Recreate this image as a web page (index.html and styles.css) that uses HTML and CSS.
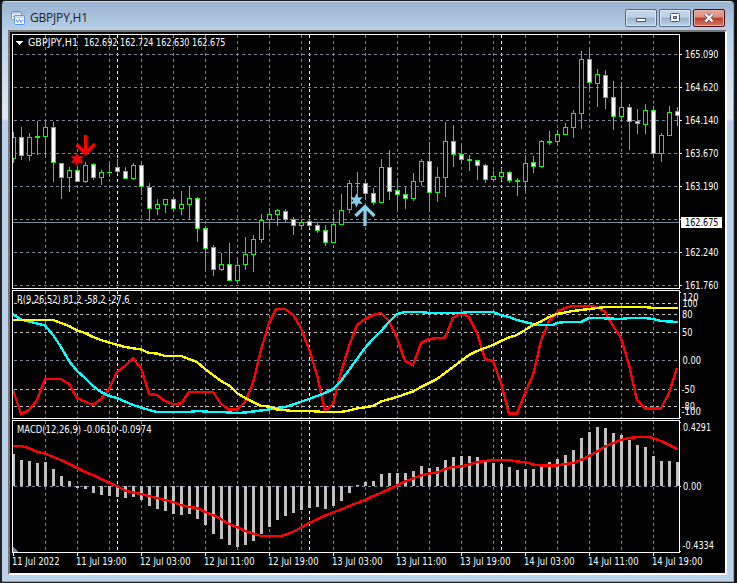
FILE: index.html
```
<!DOCTYPE html>
<html lang="en">
  <head>
    <meta charset="UTF-8" />
    <title>GBPJPY,H1</title>
    <link rel="stylesheet" href="styles.css">
  </head>
  <body>
    <div class="window">
      <div class="titlebar">
        <svg class="app-icon" width="14" height="14" viewBox="0 0 14 14">
          <rect x="0.5" y="0.5" width="10" height="8" rx="1" fill="#fff" stroke="#5b93e8" />
          <path d="M1 2h9" stroke="#5b93e8" />
          <path d="M2 6l2-2 1.500 2" fill="none" stroke="#5b93e8" />
          <rect x="3.500" y="4.500" width="10" height="9" rx="1" fill="#fff" stroke="#5b93e8" />
          <path d="M4 6h9" stroke="#8db5f2" />
          <path d="M5 8.500l1.500 3 2-3 1.500 3 2-3" fill="none" stroke="#5b93e8" />
        </svg>
        <span class="title">GBPJPY,H1</span>
        <div class="buttons">
          <button class="btn">
            <svg width="12" height="12"><rect x="1.500" y="6.500" width="9" height="3" fill="#fff" stroke="#535666" /></svg>
          </button>
          <button class="btn">
            <svg width="12" height="12"><rect x="1.500" y="1.500" width="9" height="8" rx="1" fill="#fff" stroke="#535666" /><rect x="4.500" y="4.500" width="3" height="2" fill="#9cb6d2" stroke="#535666" /></svg>
          </button>
          <button class="btn btn-close">
            <svg width="12" height="12"><path d="M2.500 2l7 7.500M9.500 2l-7 7.500" stroke="#535666" stroke-width="4" /><path d="M2.500 2l7 7.500M9.500 2l-7 7.500" stroke="#fff" stroke-width="2.400" /></svg>
          </button>
        </div>
      </div>
      <div class="client">
        <svg class="chart" width="715" height="541" viewBox="10 32 715 541"></svg>
      </div>
    </div>
    <script src="chart.js"></script>
  </body>
</html>
```
FILE: styles.css
```
body {
  margin: 0;
  background-color: #111;
  overflow: hidden;
}
.window {
  box-sizing: border-box;
  width: 735px;
  height: 583px;
  display: flex;
  flex-direction: column;
  padding: 0 6px 6px 6px;
  border: 1px solid #1c1c1c;
  border-left: 2px solid #222;
  border-radius: 5px 5px 0 0;
  background: linear-gradient(#fff 0, #98b3d0 1px, #b9d1ea 30px, #dfe9f5 118px, #b9d1ea 120px, #b9d1ea);
  box-shadow: inset -1px -1px 0 #35c3e6;
}
.titlebar {
  display: flex;
  align-items: center;
  height: 29px;
  padding: 5px 3px 0 3px;
  box-sizing: border-box;
}
.title {
  margin-left: 5px;
  font-family: "Open Sans", sans-serif;
  font-size: 12px;
  line-height: 16px;
  letter-spacing: -0.2px;
  color: #222;
}
.buttons {
  display: flex;
  gap: 2px;
  margin-left: auto;
}
.btn {
  display: flex;
  justify-content: center;
  align-items: center;
  box-sizing: border-box;
  width: 32px;
  height: 18px;
  padding: 0;
  border: 1px solid #56667f;
  border-radius: 2px;
  background: linear-gradient(#c5d7ea 0, #bdd0e6 45%, #98b3d0 50%, #b9d1ea 100%);
  box-shadow: inset 0 0 0 1px #dbe7f4;
}
.btn-close {
  border-color: #43101a;
  background: linear-gradient(#eba79b 0, #dd8d80 45%, #b83d27 50%, #d47863 100%);
  box-shadow: inset 0 0 0 1px #e9aaa0;
}
.client {
  width: 715px;
  height: 541px;
  border: 2px solid #fff;
  border-top-color: #777;
  border-left-color: #777;
  background-color: #000;
}
.chart {
  display: block;
  shape-rendering: crispEdges;
}
.label {
  font-family: "DejaVu Sans Condensed", "DejaVu Sans", sans-serif;
  font-size: 11px;
  fill: #fff;
}
.label-current {
  fill: #000;
}
.smooth {
  shape-rendering: auto;
}
```
FILE: chart.js
```
const svg = document.querySelector(".chart");
const GRID = "#778899";
const LEVEL = "#c0c0c0";
const LEFT = 13;
const STEP = 8;

function add(tag, attrs, text) {
  const el = document.createElementNS("http://www.w3.org/2000/svg", tag);
  for (let key in attrs) el.setAttribute(key, attrs[key]);
  if (text) el.textContent = text;
  svg.appendChild(el);
}
function rect(x, y, width, height, fill) {
  add("rect", { x, y, width, height, fill });
}
function dash(x1, y1, x2, y2, stroke) {
  add("line", { x1, y1, x2, y2, stroke, "stroke-dasharray": "3 3" });
}
function label(x, y, text, width, cls) {
  add("text", { x, y, class: "label " + (cls || ""), textLength: width, lengthAdjust: "spacingAndGlyphs" }, text);
}
function curve(points, stroke) {
  add("polyline", { points, stroke, fill: "none", "stroke-width": 2.4 });
}

// high, body top, body bottom, low, type (1 = down, 0 = up)
const candles = [
  [132,137,159,163,0],[127,137,156,160,1],[133,137,156,161,0],[121,136,138,155,0],[119,127,137,158,0],
  [122,127,163,182,1],[163,163,178,199,1],[167,170,178,192,0],[166,170,182,182,1],[162,165,182,183,0],
  [163,164,178,180,1],[170,172,178,185,0],[164,172,173,177,0],[159,167,172,174,1],[167,171,179,179,1],
  [163,165,179,180,0],[162,165,187,195,1],[183,187,209,221,1],[199,204,209,215,0],[199,199,205,213,0],
  [197,199,209,212,1],[191,204,209,215,0],[186,198,205,220,0],[197,198,229,242,1],[226,228,249,269,1],
  [245,247,270,276,1],[253,264,270,271,0],[243,264,281,281,1],[260,265,281,283,0],[237,254,265,270,0],
  [235,239,255,272,0],[214,220,240,243,0],[208,214,220,227,0],[209,210,215,226,0],[209,211,220,223,1],
  [217,219,226,235,1],[219,222,226,229,0],[219,221,226,228,1],[223,225,231,233,1],[225,230,243,246,1],
  [214,224,243,243,0],[194,210,225,225,0],[180,183,210,213,0],[172,183,184,196,0],[179,183,194,199,1],
  [188,193,203,205,1],[159,167,203,203,0],[150,167,192,200,1],[178,190,195,210,1],[187,194,199,209,1],
  [173,181,199,201,0],[159,161,182,186,0],[142,161,193,211,1],[167,177,193,202,0],[122,141,178,197,0],
  [125,141,155,167,1],[143,154,160,163,1],[155,159,161,171,0],[160,160,166,180,1],[164,165,180,183,1],
  [171,176,180,181,0],[168,172,177,181,0],[171,172,181,183,1],[178,180,182,196,0],[157,163,182,192,0],
  [156,162,167,173,1],[140,141,167,168,0],[131,141,143,145,0],[130,134,142,146,0],[123,127,135,135,0],
  [110,113,128,138,0],[51,59,114,129,0],[47,59,83,89,1],[69,74,84,107,0],[70,75,98,109,1],
  [81,97,117,130,1],[82,107,117,122,0],[104,107,122,150,1],[109,121,124,134,1],[104,110,125,134,0],
  [106,110,154,157,1],[133,135,154,162,0],[106,112,136,136,0],[107,111,116,126,1]
];

// outer end of each histogram bar
const macd = [
  454,460,461,463,462,469,476,481,488,489,493,495,496,497,498,497,500,506,509,511,514,
  515,514,519,525,534,539,545,547,545,541,534,527,520,516,513,510,508,507,509,506,501,
  493,485,482,481,474,473,473,473,471,466,468,467,460,457,456,456,457,460,463,464,467,
  470,469,469,466,462,459,455,450,438,432,427,428,433,435,440,445,447,456,461,461,462
];

// grid
const panels = [[34, 288], [290, 418], [420, 552]];
for (let [top, bottom] of panels) {
  for (let x = 45; x < 679; x += 32) dash(x + 0.5, top + 1, x + 0.5, bottom, GRID);
  for (let x of [117, 309, 501]) dash(x + 0.5, top + 1, x + 0.5, bottom, "#fff");
}
for (let y = 54; y < 288; y += 33) dash(14, y + 0.5, 679, y + 0.5, GRID);
for (let y of [303, 314, 332, 389, 406]) dash(14, y + 0.5, 679, y + 0.5, LEVEL);
dash(14, 360.5, 679, 360.5, GRID);
dash(14, 486.5, 679, 486.5, GRID);
rect(13, 222, 666, 1, GRID);

// candles
candles.forEach(([high, top, bottom, low, down], i) => {
  const x = LEFT + i * STEP;
  rect(x, high, 1, low - high, "#00ff00");
  const l = Math.max(x - 2, 13);
  const r = Math.min(x + 3, 679);
  rect(l, top, r - l, bottom - top, "#00ff00");
  if (bottom - top > 2) {
    const il = Math.max(x - 1, 13);
    rect(il, top + 1, Math.min(x + 2, 679) - il, bottom - top - 2, down ? "#fff" : "#000");
  }
});

// signals
function star(cx, cy, fill) {
  let points = [];
  for (let i = 0; i < 12; i++) {
    const r = i % 2 ? 3.4 : 7.2;
    const a = (i * Math.PI) / 6 - Math.PI / 2;
    points.push(cx + r * Math.cos(a) + "," + (cy + r * Math.sin(a)));
  }
  add("polygon", { points: points.join(" "), fill, class: "smooth" });
}
star(77, 159.5, "#ff0000");
star(356.5, 200.5, "#87ceeb");
add("path", { d: "M85.5 135V154M76.500 144.500L85.500 153.500L95 144", stroke: "#ff0000", "stroke-width": 3.3, fill: "none", class: "smooth" });
add("path", { d: "M365 226V207M355.500 216L365 206.500L374.500 216", stroke: "#87ceeb", "stroke-width": 3.3, fill: "none", class: "smooth" });

// R(9,26,52)
curve("13,390 21,414 29,410 37,400 45,379 61,379 69,384 77,398 93,405 101,399 109,389 117,372 125,366 133,358.5 141,368 149,394 157,395 165,401 173,404 181,403.5 189,392 213,392 221,404 229,409.5 237,409.5 245,402 253,383 261,350 269,323 276,309 285,309 293,315 301,328 309,349 317,375 325,411 333,404 341,372 349,346 357,325 365,319 373,315 381,313 389,321 397,338 405,361 413,365 421,343 429,339 445,337.5 453,318 461,313 469,317 477,333 485,359 493,361 501,383 509,413.5 517,413.5 525,393 533,375 541,341 549,321 557,312 565,308 573,306 589,306 597,307 605,312 613,326 621,338 629,365 637,400 645,408.5 661,408.5 669,393 677,368", "#ff0000");
curve("13,314 21,319.5 45,325.5 53,335 61,347 69,361 77,371 85,378 93,386 101,392 109,396 117,398 133,405 149,410 157,412 189,412 197,411 213,412 221,412 237,413 245,412.5 269,409.5 285,407 293,404.5 309,399 325,393 333,389 341,381 349,370 357,359 365,348 373,339 381,331 389,322 397,314 405,312 421,312 429,313 461,313 469,312 493,312 501,315 509,317 517,320 525,322 533,324 541,325 553,325 557,323 565,322 581,322 589,318 597,318 621,319 629,318 645,318 653,319 661,321 678,322", "#00ffff");
curve("13,320 53,320 69,326 77,330.5 85,333 93,337 101,340 109,342.5 125,347 141,349.5 149,353 157,353.5 165,356 181,356 197,362 205,369 221,381 230,386 237,393 245,398 253,402 261,406 269,406.5 277,409.5 293,411 309,411 325,412 341,412 349,410.5 357,408.5 373,406 381,401.5 397,397 413,391.5 421,387 429,383 437,379 445,373 453,367 461,361 469,355 477,351 493,345 501,341 509,337.5 517,335 525,330 533,325 541,321.5 549,317 557,314 573,311 589,309 605,307 645,307 653,308 678,308", "#ffff00");

// MACD
macd.forEach((y, i) => {
  const x = LEFT + i * STEP;
  const l = Math.max(x - 1, 13);
  rect(l, Math.min(y, 486), Math.min(x + 2, 679) - l, Math.abs(y - 486), LEVEL);
});
curve("13,446 21,446 29,448 37,452 45,453.5 53,457 61,460 69,464 77,468 85,472 93,475 101,479 109,483 117,486 125,490.5 133,492.5 141,494 149,496 157,498 165,500 173,502 181,505 189,507 197,508 205,512 213,515 221,519 229,524 237,527 245,531 253,533.5 261,536 281,536 289,533.5 297,530 309,523 317,519.5 325,515.5 333,512.5 341,509.5 349,506 357,503 365,500 373,496 381,493 389,489 397,485.5 405,481.5 413,478.5 421,475.5 429,473.5 437,472.5 445,469 453,467 461,466.5 469,464.5 477,462 485,461 493,460 509,460 517,461.5 525,462 533,464.5 541,465.5 557,465.5 565,464 573,463 581,460 589,456 597,451.5 605,446.5 613,443 621,440 629,438 637,437 649,437 653,438 661,441 669,445 678,449.5", "#ff0000");
add("path", { d: "M13 547v5h5z", fill: GRID });

// panel frames
for (let [top, bottom] of panels) {
  add("rect", { x: 12.5, y: top + 0.5, width: 667, height: bottom - top, fill: "none", stroke: "#fff" });
}

// price scale
const prices = ["165.090", "164.620", "164.140", "163.670", "163.190", "", "162.240", "161.760"];
prices.forEach((price, i) => {
  const y = 54 + i * 33;
  rect(680, y, 2, 1, "#fff");
  if (price) label(685, y + 4, price, 33.5);
});
rect(681, 217, 41, 11, "#fff");
label(685, 226, "162.675", 33.5, "label-current");

label(682.5, 301, "120", 16);
label(682.5, 307, "100", 15);
label(682, 318, "80", 10.5);
label(682, 336, "50", 10.5);
label(682.5, 364, "0.00", 18.5);
label(681.5, 393, "-50", 13.5);
label(681.5, 410, "-80", 13.5);
label(681.5, 415, "-100", 19.5);
label(683, 431, "0.4291", 28);
label(683, 490, "0.00", 18.5);
label(682.5, 549, "-0.4334", 31.5);
for (let y of [292, 417, 422, 486, 551]) rect(680, y, 1, 1, "#fff");

// time scale
const times = ["11 Jul 2022", "11 Jul 19:00", "12 Jul 03:00", "12 Jul 11:00", "12 Jul 19:00", "13 Jul 03:00", "13 Jul 11:00", "13 Jul 19:00", "14 Jul 03:00", "14 Jul 11:00", "14 Jul 19:00"];
times.forEach((time, i) => {
  const x = LEFT + i * 64;
  rect(x, 553, 1, 3, "#fff");
  label(x - 1, 565, time, i ? 50.5 : 47.5);
});

// headers
add("path", { d: "M16 41h7l-3.500 4z", fill: "#fff" });
label(28, 46, "GBPJPY,H1", 50);
label(84, 46, "162.692 162.724 162.630 162.675", 141.5);
label(17, 303, "R(9,26,52) 81.2 -58.2 -27.6", 112.5);
label(17, 433, "MACD(12,26,9) -0.0610 -0.0974", 134.5);
```
